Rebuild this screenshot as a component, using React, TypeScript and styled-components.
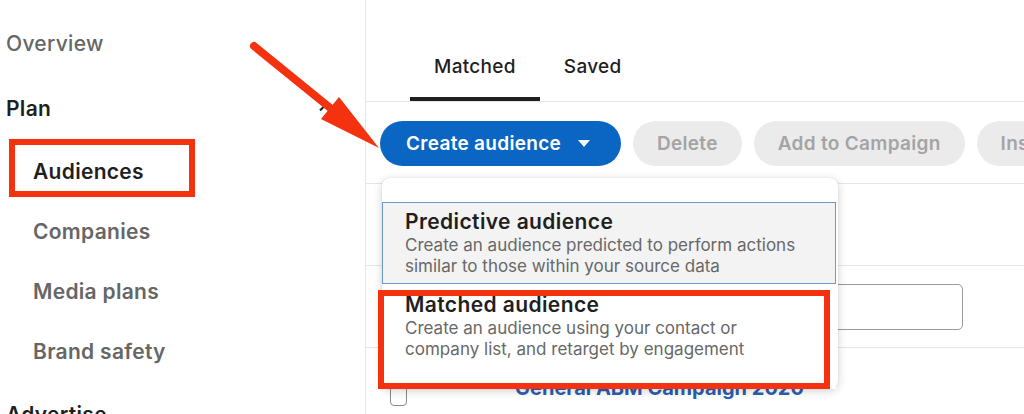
import styled, { createGlobalStyle } from "styled-components";

const GlobalStyle = createGlobalStyle`
  * { box-sizing: border-box; }
  html, body { margin: 0; padding: 0; background: #fff; }
  body { font-family: "Inter", "Noto Sans", sans-serif; color: #1f1f1f; }
`;

const RED = "#f5320f";

const navItems = [
  { label: "Overview", kind: "top" },
  { label: "Plan", kind: "section" },
  { label: "Audiences", kind: "item", active: true },
  { label: "Companies", kind: "item" },
  { label: "Media plans", kind: "item" },
  { label: "Brand safety", kind: "item" },
  { label: "Advertise", kind: "section" },
] as const;

const App: React.FC = () => {
  return (
    <>
      <GlobalStyle />
      <Page>
        <Sidebar>
          {navItems.map((n) => (
            <NavItem key={n.label} $kind={n.kind} $active={"active" in n}>
              {n.label}
              {n.label === "Plan" && (
                <Chevron viewBox="0 0 16 16">
                  <path d="M3 10.5 8 5.5l5 5" fill="none" stroke="#1f1f1f" strokeWidth="2" />
                </Chevron>
              )}
            </NavItem>
          ))}
        </Sidebar>

        <Main>
          <TabBar>
            <Tab $active>Matched</Tab>
            <Tab>Saved</Tab>
          </TabBar>

          <Toolbar>
            <PrimaryButton>
              Create audience
              <Caret viewBox="0 0 12 8">
                <path d="M0 0h12L6 7z" fill="#fff" />
              </Caret>
            </PrimaryButton>
            <GhostButton>Delete</GhostButton>
            <GhostButton>Add to Campaign</GhostButton>
            <GhostButton>Insights</GhostButton>
          </Toolbar>

          <Row $height={82} />
          <Row $height={82}>
            <SearchInput />
          </Row>
          <ListRow>
            <Checkbox />
            <CampaignLink>General ABM Campaign 2020</CampaignLink>
          </ListRow>
        </Main>

        <Menu>
          <MenuItem $focused>
            <MenuTitle>Predictive audience</MenuTitle>
            <MenuText>
              Create an audience predicted to perform actions
              <br />
              similar to those within your source data
            </MenuText>
          </MenuItem>
          <MenuItem>
            <MenuTitle>Matched audience</MenuTitle>
            <MenuText>
              Create an audience using your contact or
              <br />
              company list, and retarget by engagement
            </MenuText>
          </MenuItem>
        </Menu>

        <Callout $x={9} $y={139} $w={186} $h={58} />
        <Callout $x={378} $y={290} $w={452} $h={99} />

        <Pointer viewBox="0 0 1024 414">
          <line x1="254" y1="46" x2="334" y2="111" stroke={RED} strokeWidth="8" strokeLinecap="round" />
          <polygon points="321,119 339,97 379,148" fill={RED} />
        </Pointer>
      </Page>
    </>
  );
};

export default App;

const Page = styled.div`
  position: relative;
  display: flex;
  width: 1024px;
  height: 414px;
  overflow: hidden;
  background: #fff;
`;

const Sidebar = styled.nav`
  width: 366px;
  flex-shrink: 0;
  padding-top: 11px;
  border-right: 1px solid #e4e4e4;
  display: flex;
  flex-direction: column;
`;

const NavItem = styled.div<{ $kind: "top" | "section" | "item"; $active?: boolean }>`
  display: flex;
  align-items: center;
  justify-content: space-between;
  height: ${(p) => (p.$kind === "item" ? 60 : p.$kind === "section" ? 66 : 64)}px;
  flex-shrink: 0;
  padding-left: ${(p) => (p.$kind === "item" ? 33 : 6)}px;
  padding-right: 32px;
  font-size: 21px;
  font-weight: ${(p) => (p.$kind === "top" ? 500 : 600)};
  letter-spacing: 0.3px;
  color: ${(p) => (p.$kind === "section" || p.$active ? "#1f1f1f" : "#666")};
  white-space: nowrap;
`;

const Chevron = styled.svg`
  width: 16px;
  height: 16px;
`;

const Main = styled.main`
  flex: 1;
  display: flex;
  flex-direction: column;
  min-width: 0;
`;

const TabBar = styled.div`
  display: flex;
  padding: 38px 0 0 44px;
  border-bottom: 1px solid #e6e6e6;
`;

const Tab = styled.div<{ $active?: boolean }>`
  height: 63px;
  display: flex;
  align-items: center;
  padding: 0 24px 2px;
  font-size: 19px;
  font-weight: 500;
  letter-spacing: 0.3px;
  color: #1f1f1f;
  border-bottom: 4px solid ${(p) => (p.$active ? "#1f1f1f" : "transparent")};
`;

const Toolbar = styled.div`
  display: flex;
  gap: 12px;
  padding: 19px 0 17px 14px;
  border-bottom: 1px solid #e6e6e6;
  white-space: nowrap;
`;

const BaseButton = styled.div`
  height: 45px;
  border-radius: 23px;
  display: flex;
  align-items: center;
  flex-shrink: 0;
  padding: 0 24px;
  font-size: 19px;
  font-weight: 600;
  letter-spacing: 0.3px;
`;

const PrimaryButton = styled(BaseButton)`
  width: 241px;
  padding-left: 26px;
  background: #0a66c2;
  color: #fff;
`;

const Caret = styled.svg`
  width: 12px;
  height: 8px;
  margin-left: 17px;
`;

const GhostButton = styled(BaseButton)`
  background: #ebebeb;
  color: #a4a4a4;
`;

const Row = styled.div<{ $height: number }>`
  height: ${(p) => p.$height}px;
  flex-shrink: 0;
  display: flex;
  align-items: center;
  padding-left: 24px;
  border-bottom: 1px solid #e6e6e6;
`;

const SearchInput = styled.div`
  width: 573px;
  height: 46px;
  border: 1px solid #9a9a9a;
  border-radius: 5px;
`;

const ListRow = styled.div`
  display: flex;
  align-items: flex-start;
  padding: 28px 0 0 24px;
`;

const Checkbox = styled.div`
  width: 17px;
  height: 22px;
  margin-top: 8px;
  border: 1.5px solid #8a8a8a;
  border-radius: 4px;
`;

const CampaignLink = styled.span`
  margin-left: 108px;
  font-size: 20px;
  font-weight: 700;
  color: #2c5fb0;
`;

const Menu = styled.div`
  position: absolute;
  left: 382px;
  top: 178px;
  width: 456px;
  height: 211px;
  padding-top: 24px;
  background: #fff;
  border-radius: 8px;
  box-shadow: 0 2px 10px rgba(0, 0, 0, 0.18), 0 0 1px rgba(0, 0, 0, 0.2);
`;

const MenuItem = styled.div<{ $focused?: boolean }>`
  height: ${(p) => (p.$focused ? 82 : 105)}px;
  padding: ${(p) => (p.$focused ? "5px" : "6px")} 22px 0;
  background: ${(p) => (p.$focused ? "#f3f3f3" : "#fff")};
  border: 1px solid ${(p) => (p.$focused ? "#6b98cf" : "transparent")};
  margin-right: 2px;
`;

const MenuTitle = styled.div`
  font-size: 21px;
  line-height: 27px;
  font-weight: 600;
  letter-spacing: 0.4px;
  color: #1f1f1f;
`;

const MenuText = styled.div`
  font-size: 17px;
  line-height: 21px;
  letter-spacing: 0;
  color: #686868;
  white-space: nowrap;
`;

const Callout = styled.div<{ $x: number; $y: number; $w: number; $h: number }>`
  position: absolute;
  left: ${(p) => p.$x}px;
  top: ${(p) => p.$y}px;
  width: ${(p) => p.$w}px;
  height: ${(p) => p.$h}px;
  border: 6px solid ${RED};
  pointer-events: none;
`;

const Pointer = styled.svg`
  position: absolute;
  inset: 0;
  width: 1024px;
  height: 414px;
  pointer-events: none;
`;
